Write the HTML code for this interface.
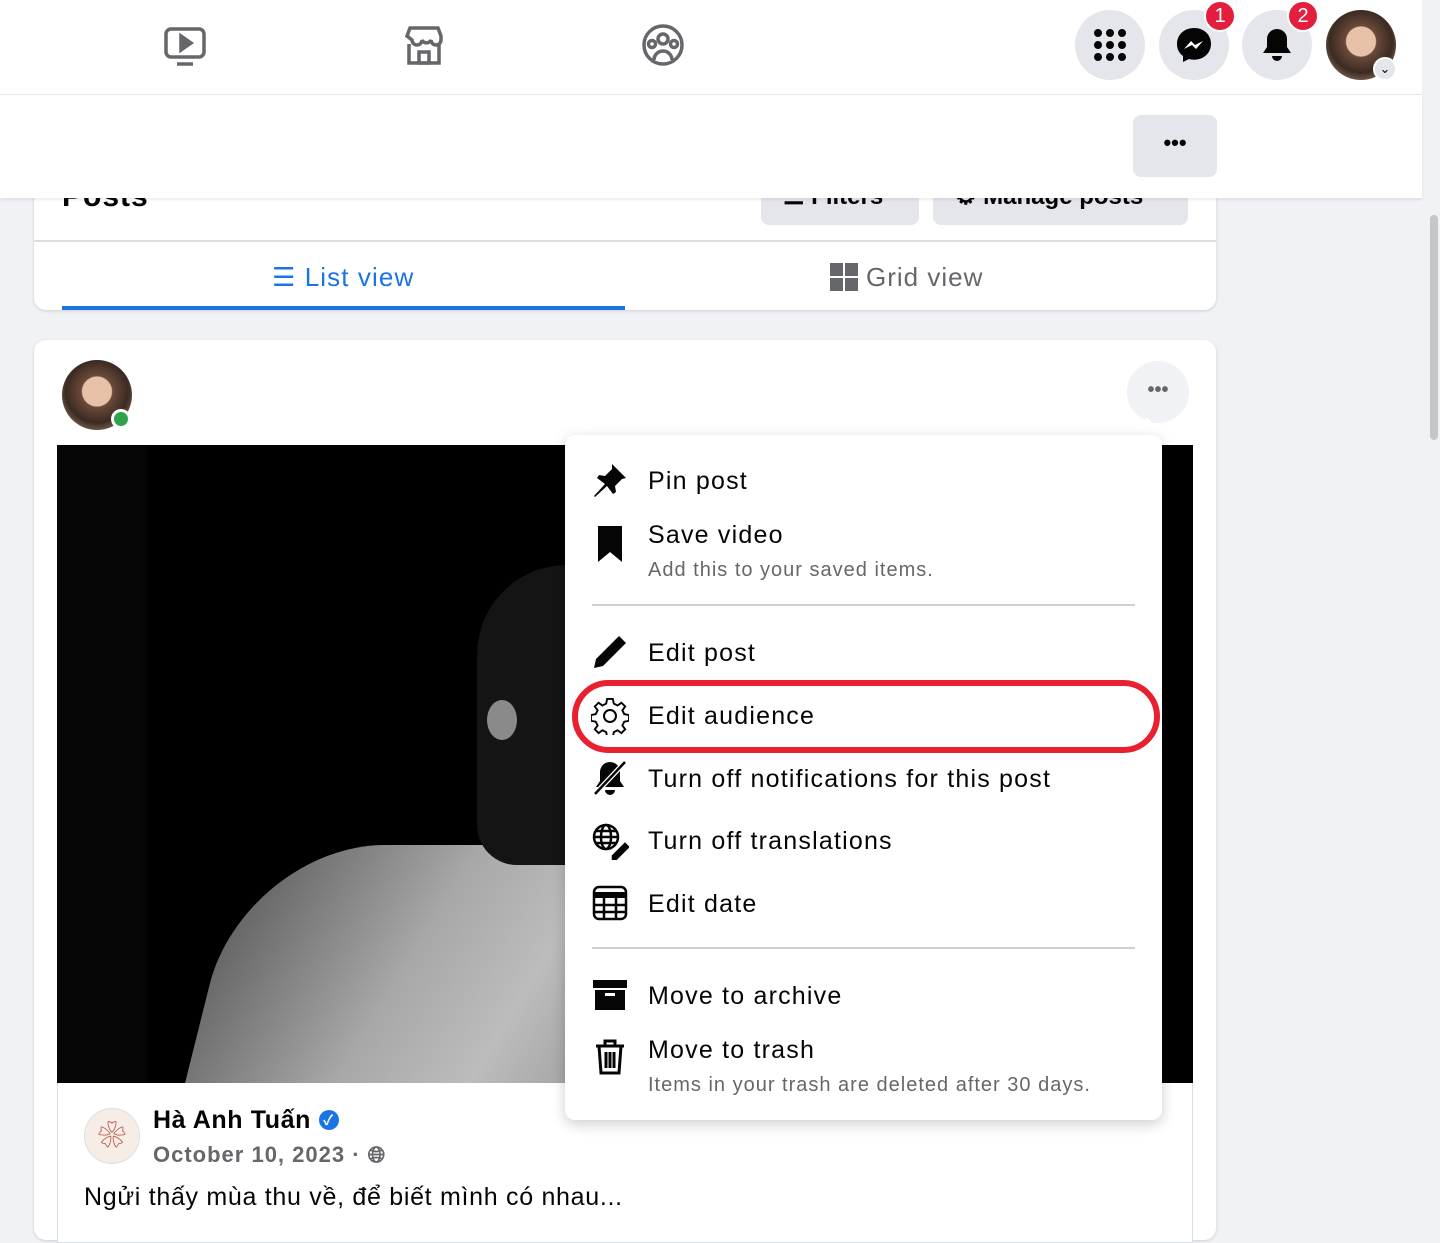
<!DOCTYPE html>
<html><head><meta charset="utf-8"><style>
*{box-sizing:border-box;margin:0;padding:0}
body{width:1440px;height:1224px;overflow:hidden;background:#f0f2f5;font-family:"Liberation Sans","Noto Sans CJK SC",sans-serif;position:relative;color:#050505}
.abs{position:absolute}
.card{background:#fff;border-radius:12px;box-shadow:0 1px 3px rgba(0,0,0,.15)}
.circ{border-radius:50%;background:#e4e6eb;width:70px;height:70px;display:flex;align-items:center;justify-content:center}
.badge{position:absolute;background:#e41e3f;color:#fff;border-radius:50%;width:32px;height:32px;font-size:20px;display:flex;align-items:center;justify-content:center;border:2px solid #fff}
.mt{font-size:25px;color:#050505;position:absolute;left:648px;letter-spacing:1.2px}
.ms{font-size:20px;color:#65676b;position:absolute;left:648px;letter-spacing:1px}
</style></head><body>
<div class="abs" style="left:1422px;top:0;width:18px;height:1224px;background:#f0f2f5"></div>
<div class="abs" style="left:1430px;top:215px;width:8px;height:225px;background:#c4c6ca;border-radius:4px"></div>
<!-- card 1 -->
<div class="card abs" style="left:34px;top:150px;width:1182px;height:160px"></div>
<div class="abs" style="left:62px;top:180px;font-size:30px;font-weight:bold;letter-spacing:1px">Posts</div>
<div class="abs" style="left:761px;top:170px;width:158px;height:55px;background:#e4e6eb;border-radius:8px;font-size:24px;font-weight:bold;padding:12px 0 0 22px">⚌ Filters</div>
<div class="abs" style="left:933px;top:170px;width:255px;height:55px;background:#e4e6eb;border-radius:8px;font-size:24px;font-weight:bold;padding:12px 0 0 22px">⚙ Manage posts</div>
<div class="abs" style="left:34px;top:240px;width:1182px;height:2px;background:#dadde1"></div>
<div class="abs" style="left:272px;top:262px;font-size:26px;color:#1b74e4;letter-spacing:1.1px">☰ List view</div>
<div class="abs" style="left:62px;top:306px;width:563px;height:4px;background:#1b74e4"></div>
<div class="abs" style="left:830px;top:263px;width:28px;height:28px;display:grid;grid-template-columns:13px 13px;gap:2px"><i style="background:#65676b"></i><i style="background:#65676b"></i><i style="background:#65676b"></i><i style="background:#65676b"></i></div>
<div class="abs" style="left:866px;top:262px;font-size:26px;color:#65676b;letter-spacing:1px">Grid view</div>
<!-- top nav -->
<div class="abs" style="left:0;top:0;width:1422px;height:95px;background:#fff;border-bottom:1px solid #e4e6eb"></div>
<div class="abs" style="left:0;top:95px;width:1422px;height:103px;background:#fff;box-shadow:0 2px 3px rgba(0,0,0,.08)"></div>
<svg class="abs" style="left:163px;top:25px" width="44" height="44" viewBox="0 0 44 44" fill="none" stroke="#65676b" stroke-width="3.5"><rect x="3" y="4" width="38" height="28" rx="5"/><path d="M18 11v14l10-7z" fill="#65676b"/><path d="M14 39h16"/></svg>
<svg class="abs" style="left:402px;top:24px" width="44" height="44" viewBox="0 0 44 44" fill="none" stroke="#65676b" stroke-width="3.5"><path d="M5 12l3-8h28l3 8v4a5 5 0 0 1-10 0 5 5 0 0 1-9 0 5 5 0 0 1-10 0z"/><path d="M7 20v19h30V20"/><rect x="17" y="28" width="10" height="11"/></svg>
<svg class="abs" style="left:641px;top:23px" width="44" height="44" viewBox="0 0 44 44" fill="none" stroke="#65676b" stroke-width="3.5"><circle cx="22" cy="22" r="19"/><circle cx="22" cy="16" r="5"/><circle cx="11" cy="21" r="3.5"/><circle cx="33" cy="21" r="3.5"/><path d="M13 37a9 9 0 0 1 18 0"/></svg>
<div class="circ abs" style="left:1075px;top:10px"><svg width="34" height="34" viewBox="0 0 34 34" fill="#050505"><circle cx="5" cy="5" r="4"/><circle cx="17" cy="5" r="4"/><circle cx="29" cy="5" r="4"/><circle cx="5" cy="17" r="4"/><circle cx="17" cy="17" r="4"/><circle cx="29" cy="17" r="4"/><circle cx="5" cy="29" r="4"/><circle cx="17" cy="29" r="4"/><circle cx="29" cy="29" r="4"/></svg></div>
<div class="circ abs" style="left:1159px;top:10px"><svg width="38" height="38" viewBox="0 0 38 38"><path d="M19 2C9 2 2 9 2 18c0 5 2 9 6 12v6l6-3c2 .5 3 .7 5 .7 10 0 17-7 17-16S29 2 19 2z" fill="#050505"/><path d="M9 23l7-8 4 4 8-4-7 8-4-4z" fill="#fff"/></svg></div>
<div class="badge" style="left:1204px;top:0">1</div>
<div class="circ abs" style="left:1242px;top:10px"><svg width="36" height="36" viewBox="0 0 36 36" fill="#050505"><path d="M18 2a10 10 0 0 0-10 10v8l-4 6h28l-4-6v-8A10 10 0 0 0 18 2z"/><path d="M13 29a5 5 0 0 0 10 0z"/></svg></div>
<div class="badge" style="left:1287px;top:0">2</div>
<div class="abs" style="left:1326px;top:10px;width:70px;height:70px;border-radius:50%;background:radial-gradient(circle at 50% 45%,#e8c2a8 0 28%,#6b4a3a 30%,#3b2a22 60%,#c9a58c 100%)"></div>
<div class="abs" style="left:1373px;top:57px;width:24px;height:24px;border-radius:50%;background:#e4e6eb;border:2px solid #fff;font-size:13px;text-align:center;line-height:20px">⌄</div>
<div class="abs" style="left:1133px;top:115px;width:84px;height:62px;background:#e4e6eb;border-radius:8px;font-size:22px;font-weight:bold;text-align:center;line-height:56px">•••</div>
<!-- post card -->
<div class="card abs" style="left:34px;top:340px;width:1182px;height:900px"></div>
<div class="abs" style="left:62px;top:360px;width:70px;height:70px;border-radius:50%;background:radial-gradient(circle at 50% 45%,#e8c2a8 0 28%,#6b4a3a 30%,#3b2a22 60%,#c9a58c 100%)"></div>
<div class="abs" style="left:111px;top:409px;width:20px;height:20px;border-radius:50%;background:#31a24c;border:3px solid #fff"></div>
<div class="abs" style="left:1127px;top:361px;width:62px;height:62px;border-radius:50%;background:#f0f2f5;font-size:20px;font-weight:bold;text-align:center;line-height:58px;color:#65676b">•••</div>
<div class="abs" style="left:57px;top:445px;width:1136px;height:638px;background:#000;overflow:hidden">
 <div class="abs" style="left:0;top:0;width:90px;height:638px;background:#050505"></div>
 <div class="abs" style="left:150px;top:400px;width:420px;height:300px;background:linear-gradient(110deg,#5a5a5a,#a8a8a8 45%,#bcbcbc 70%,#999);border-radius:140px 40px 0 0;transform:skewX(-14deg)"></div>
 <div class="abs" style="left:420px;top:120px;width:180px;height:300px;background:#141414;border-radius:90px 90px 40px 40px"></div>
 <div class="abs" style="left:430px;top:255px;width:30px;height:40px;background:#8a8a8a;border-radius:50%"></div>
</div>
<div class="abs" style="left:57px;top:1083px;width:1136px;height:160px;border:1px solid #dadde1;border-top:none;background:#fff"></div>
<div class="abs" style="left:84px;top:1108px;width:56px;height:56px;border-radius:50%;background:#f5ede6;border:1px solid #ddd;color:#c0504d;font-size:28px;text-align:center;line-height:54px">❀</div>
<div class="abs" style="left:153px;top:1106px;font-size:25px;font-weight:bold;letter-spacing:.6px">Hà Anh Tuấn <span style="display:inline-block;width:20px;height:20px;border-radius:50%;background:#1b74e4;color:#fff;font-size:14px;line-height:20px;text-align:center;vertical-align:3px">✓</span></div>
<div class="abs" style="left:153px;top:1142px;font-size:22px;color:#65676b;font-weight:bold;letter-spacing:1px">October 10, 2023 · 🌐︎</div>
<div class="abs" style="left:84px;top:1183px;font-size:25px;letter-spacing:.7px">Ngửi thấy mùa thu về, để biết mình có nhau...</div>
<!-- menu -->
<div class="abs" style="left:1136px;top:422px;width:22px;height:22px;background:#fff;transform:rotate(45deg)"></div>
<div class="abs" style="left:565px;top:435px;width:597px;height:685px;background:#fff;border-radius:10px;box-shadow:0 4px 14px rgba(0,0,0,.2)"></div>
<svg class="abs" style="left:592px;top:462px" width="36" height="36" viewBox="0 0 36 36" fill="#050505"><path d="M20 2l14 14-4 1-7 7 1 6-3 2-6-8-12 11-1-1 11-12-8-6 2-3 6 1 7-7z"/></svg>
<div class="mt" style="top:467px">Pin post</div>
<svg class="abs" style="left:596px;top:524px" width="28" height="40" viewBox="0 0 28 40" fill="#050505"><path d="M2 2h24v36L14 28 2 38z"/></svg>
<div class="mt" style="top:521px">Save video</div>
<div class="ms" style="top:559px">Add this to your saved items.</div>
<div class="abs" style="left:592px;top:604px;width:543px;height:2px;background:#ced0d4"></div>
<svg class="abs" style="left:592px;top:634px" width="36" height="36" viewBox="0 0 36 36" fill="#050505"><path d="M27 2l7 7L11 32 2 34l2-9z"/></svg>
<div class="mt" style="top:639px">Edit post</div>
<svg class="abs" style="left:591px;top:697px" width="38" height="38" viewBox="0 0 38 38" fill="none" stroke="#050505" stroke-width="2"><path d="M16 3h6l1 5 4 2 4-3 4 4-3 4 2 4 5 1v6l-5 1-2 4 3 4-4 4-4-3-4 2-1 5h-6l-1-5-4-2-4 3-4-4 3-4-2-4-5-1v-6l5-1 2-4-3-4 4-4 4 3 4-2z" transform="scale(.95) translate(1 -1)"/><circle cx="19" cy="19" r="6"/></svg>
<div class="mt" style="top:702px">Edit audience</div>
<div class="abs" style="left:572px;top:680px;width:588px;height:73px;border:6px solid #e8202f;border-radius:37px"></div>
<svg class="abs" style="left:592px;top:759px" width="36" height="38" viewBox="0 0 36 38" fill="#050505"><path d="M18 3a10 10 0 0 0-10 10v9l-4 6h28l-4-6v-9A10 10 0 0 0 18 3z"/><path d="M13 31a5 5 0 0 0 10 0z"/><path d="M3 35L33 3" stroke="#fff" stroke-width="5"/><path d="M3 35L33 3" stroke="#050505" stroke-width="2.5"/></svg>
<div class="mt" style="top:765px">Turn off notifications for this post</div>
<svg class="abs" style="left:591px;top:822px" width="38" height="38" viewBox="0 0 38 38" fill="none" stroke="#050505" stroke-width="2.5"><circle cx="15" cy="15" r="12"/><ellipse cx="15" cy="15" rx="5" ry="12"/><path d="M3 15h24M5 9h20M5 21h20"/><path d="M22 34l12-12 3 3-12 12h-3z" fill="#050505"/></svg>
<div class="mt" style="top:827px">Turn off translations</div>
<svg class="abs" style="left:592px;top:885px" width="36" height="36" viewBox="0 0 36 36" fill="none" stroke="#050505" stroke-width="2.5"><rect x="2" y="2" width="32" height="32" rx="5"/><path d="M2 10h32" stroke-width="6"/><path d="M2 20h32M2 27h32M12 10v24M24 10v24"/></svg>
<div class="mt" style="top:890px">Edit date</div>
<div class="abs" style="left:592px;top:947px;width:543px;height:2px;background:#ced0d4"></div>
<svg class="abs" style="left:592px;top:978px" width="36" height="34" viewBox="0 0 36 34" fill="#050505"><rect x="1" y="2" width="34" height="8"/><path d="M3 12h30v20H3z"/><rect x="13" y="15" width="10" height="3" fill="#fff"/></svg>
<div class="mt" style="top:982px">Move to archive</div>
<svg class="abs" style="left:594px;top:1038px" width="32" height="38" viewBox="0 0 32 38" fill="none" stroke="#050505" stroke-width="3"><path d="M2 8h28M11 8V3h10v5M5 8l2 27h18l2-27M12 14v16M16 14v16M20 14v16"/></svg>
<div class="mt" style="top:1036px">Move to trash</div>
<div class="ms" style="top:1074px">Items in your trash are deleted after 30 days.</div>
</body></html>
